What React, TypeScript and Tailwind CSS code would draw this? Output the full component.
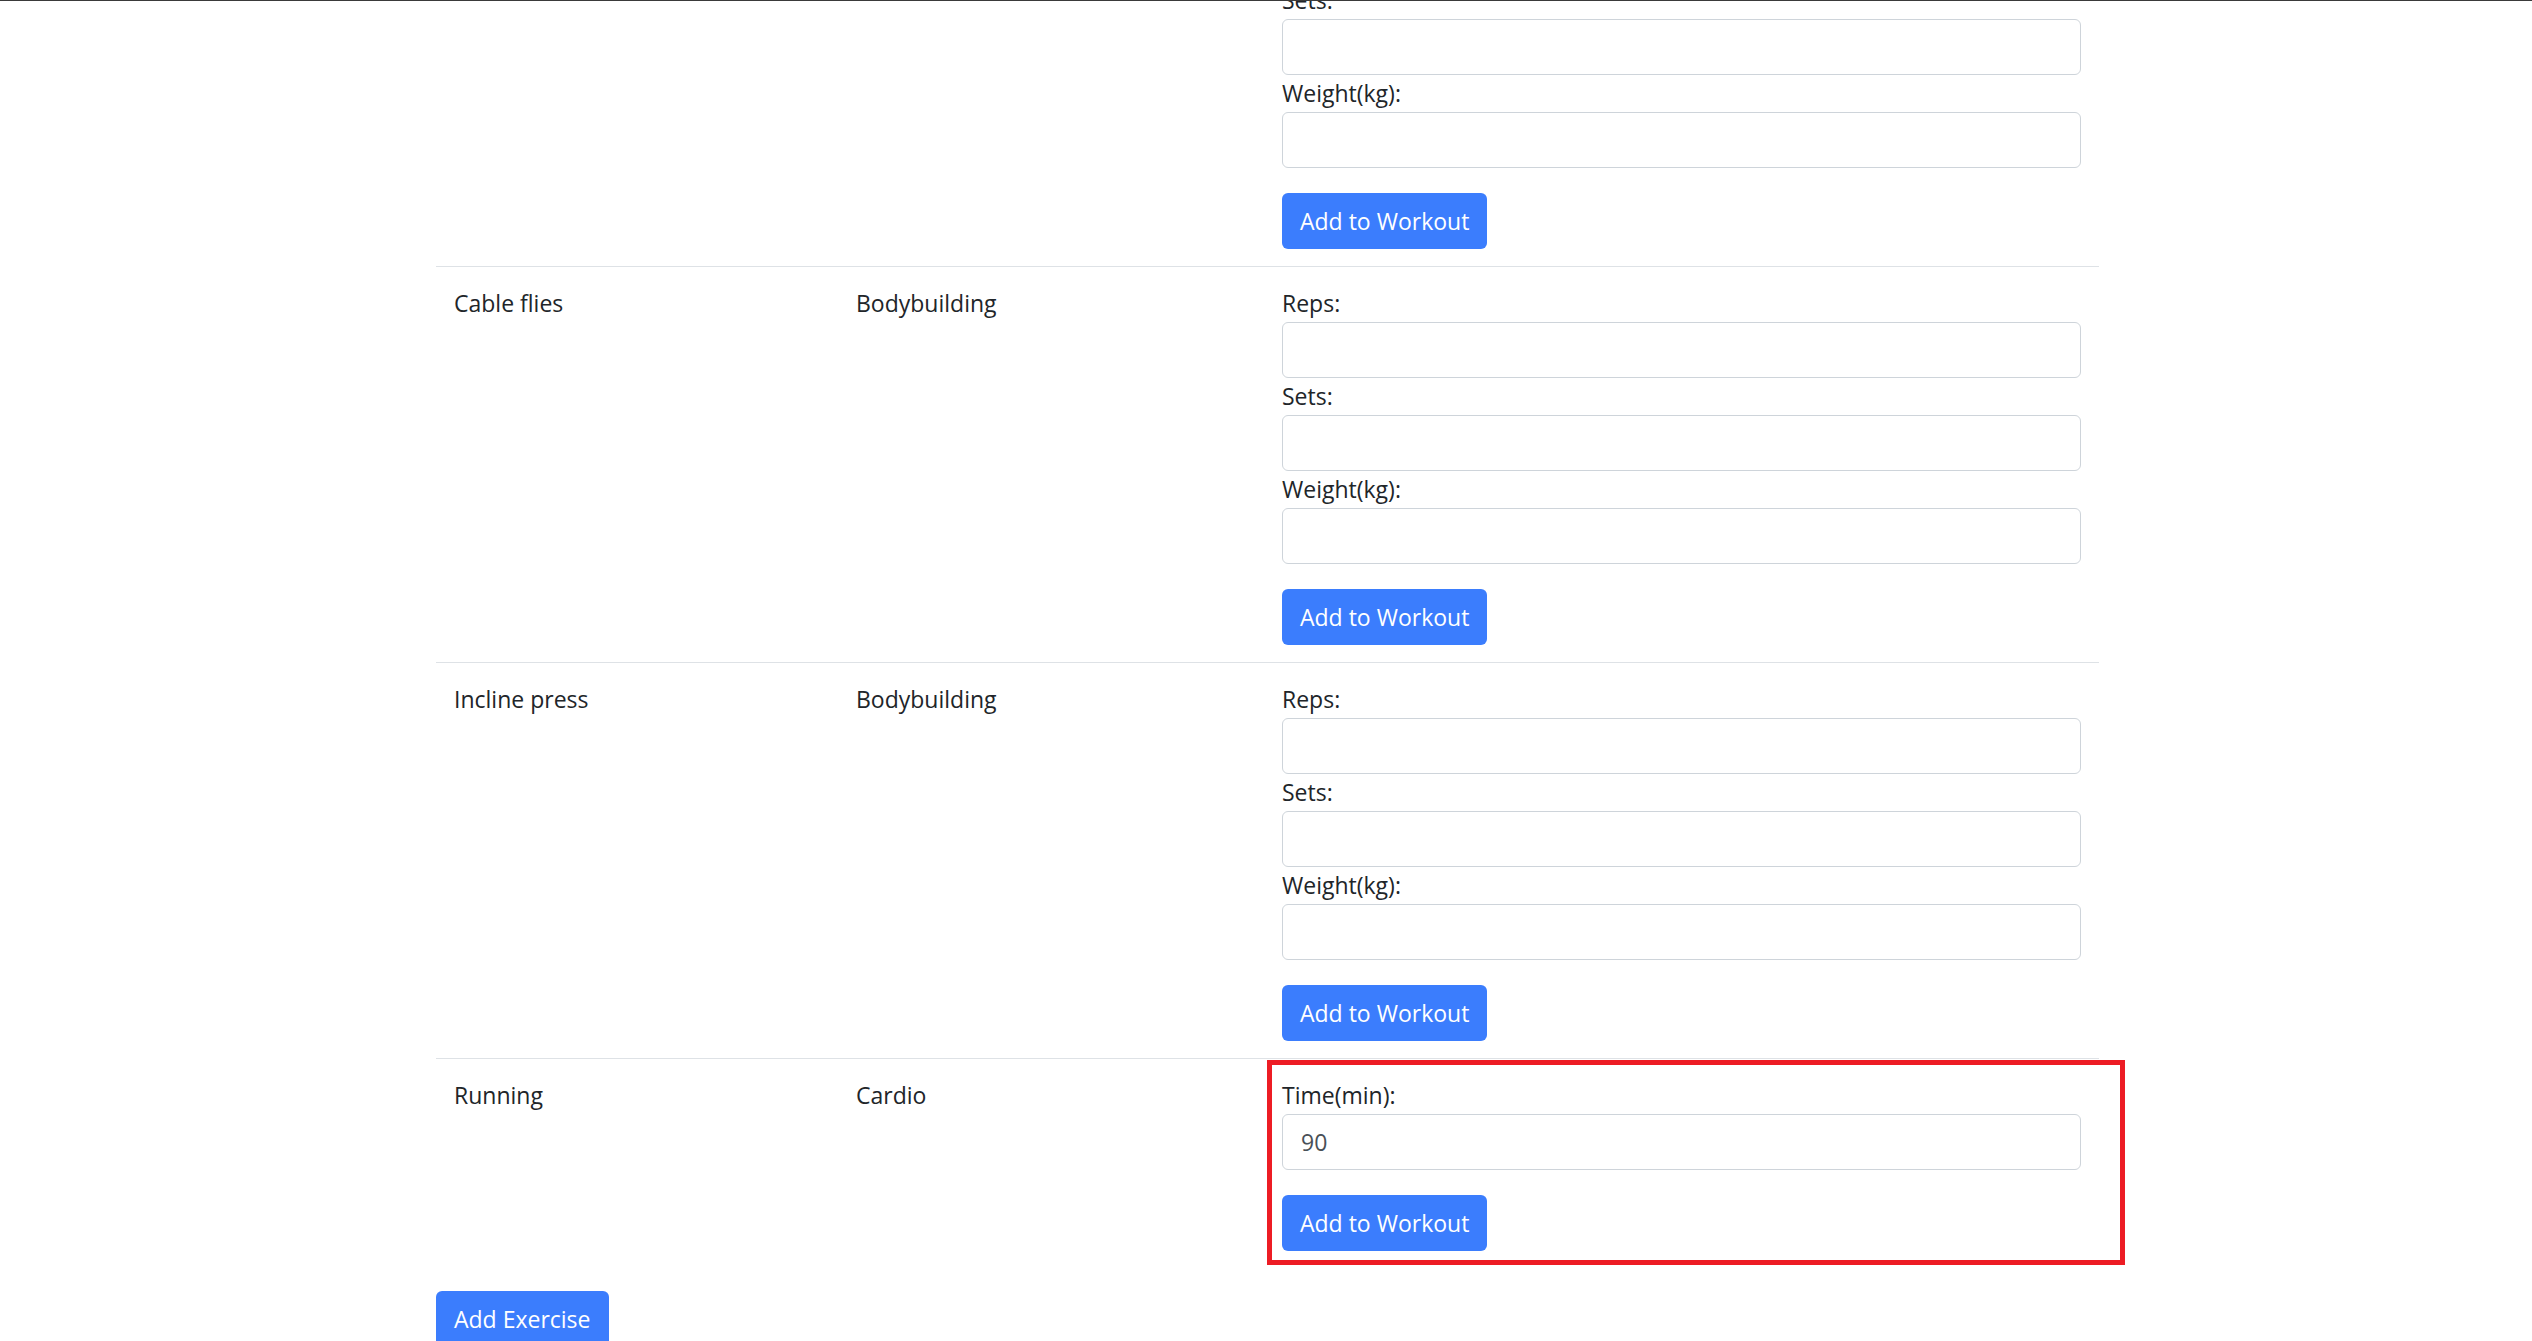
import React from 'react';

type Exercise = {
  name: string;
  type: string;
  fields: { label: string; value?: string }[];
  highlight?: boolean;
};

const EXERCISES: Exercise[] = [
  {
    name: 'Bench press',
    type: 'Bodybuilding',
    fields: [{ label: 'Reps:' }, { label: 'Sets:' }, { label: 'Weight(kg):' }],
  },
  {
    name: 'Cable flies',
    type: 'Bodybuilding',
    fields: [{ label: 'Reps:' }, { label: 'Sets:' }, { label: 'Weight(kg):' }],
  },
  {
    name: 'Incline press',
    type: 'Bodybuilding',
    fields: [{ label: 'Reps:' }, { label: 'Sets:' }, { label: 'Weight(kg):' }],
  },
  {
    name: 'Running',
    type: 'Cardio',
    fields: [{ label: 'Time(min):', value: '90' }],
    highlight: true,
  },
];

export default function App() {
  return (
    <div className="min-h-screen overflow-hidden border-t border-[#3a3a3a] bg-white font-['Open_Sans',sans-serif] text-[23px] text-[#212529]">
      {/* ── Exercise table (scrolled: first row is mostly above the fold) ── */}
      <div className="ml-[436px] -mt-[131px] w-[1663px]">
        {EXERCISES.map((ex) => (
          <ExerciseRow key={ex.name} exercise={ex} />
        ))}
      </div>

      <div className="ml-[436px] mt-[23px]">
        <button className="h-[56px] rounded-[6px] bg-[#3b7dfd] px-[18px] leading-[37px] text-white">
          Add Exercise
        </button>
      </div>
    </div>
  );
}

/* ─── Sub-components ─────────────────────────────────────────────── */
function ExerciseRow({ exercise }: { exercise: Exercise }) {
  return (
    <div className="relative flex border-t border-[#dee2e6]">
      <div className="w-[402px] px-[18px] pt-[18px] leading-[37px]">{exercise.name}</div>
      <div className="w-[426px] px-[18px] pt-[18px] leading-[37px]">{exercise.type}</div>
      <div className="flex w-[835px] flex-col px-[18px] pt-[18px] pb-[17px]">
        {exercise.fields.map((f) => (
          <div key={f.label} className="flex flex-col">
            <label className="leading-[37px]">{f.label}</label>
            <input
              defaultValue={f.value}
              className="h-[56px] w-full rounded-[6px] border border-[#ced4da] bg-white px-[18px] text-[#495057] outline-none"
            />
          </div>
        ))}
        <div className="mt-[25px]">
          <button className="h-[56px] rounded-[6px] bg-[#3b7dfd] px-[18px] leading-[37px] text-white">
            Add to Workout
          </button>
        </div>
      </div>

      {exercise.highlight && (
        <div className="pointer-events-none absolute left-[831px] top-[1px] h-[205px] w-[858px] border-[5px] border-[#ed1c24]" />
      )}
    </div>
  );
}
